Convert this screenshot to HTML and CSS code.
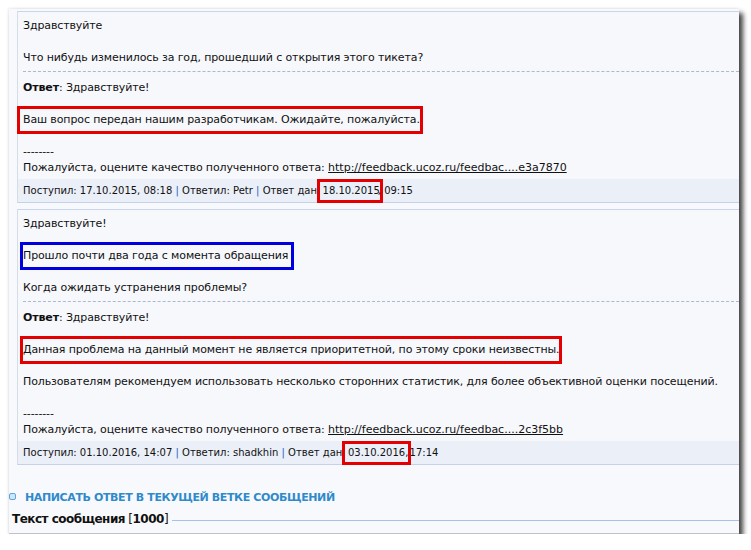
FILE: index.html
```html
<!DOCTYPE html>
<html lang="ru">
<head>
    <meta charset="UTF-8">
    <title>Тикет</title>
    <link rel="stylesheet" href="styles.css">
</head>
<body>

    <div class="shot">
        <div class="post">
            <div class="msg">Здравствуйте<br><br>Что нибудь изменилось за год, прошедший с открытия этого тикета?</div>
            <div class="answer">
                <b>Ответ</b>: Здравствуйте!<br><br>
                <span class="mark red big">Ваш вопрос передан нашим разработчикам. Ожидайте, пожалуйста.</span><br><br>
                --------<br>
                Пожалуйста, оцените качество полученного ответа: <a href="#">http://feedback.ucoz.ru/feedbac....e3a7870</a>
            </div>
            <div class="meta">Поступил: 17.10.2015, 08:18 <span class="sep">|</span> Ответил: Petr <span class="sep">|</span> Ответ дан: <span class="mark red date">18.10.2015</span>, 09:15</div>
        </div>

        <div class="post">
            <div class="msg">
                Здравствуйте!<br><br>
                <span class="mark blue">Прошло почти два года с момента обращения</span><br><br>
                Когда ожидать устранения проблемы?
            </div>
            <div class="answer">
                <b>Ответ</b>: Здравствуйте!<br><br>
                <span class="mark red">Данная проблема на данный момент не является приоритетной, по этому сроки неизвестны.</span><br><br>
                Пользователям рекомендуем использовать несколько сторонних статистик, для более объективной оценки посещений.<br><br>
                --------<br>
                Пожалуйста, оцените качество полученного ответа: <a href="#">http://feedback.ucoz.ru/feedbac....2c3f5bb</a>
            </div>
            <div class="meta">Поступил: 01.10.2016, 14:07 <span class="sep">|</span> Ответил: shadkhin <span class="sep">|</span> Ответ дан: <span class="mark red date">03.10.2016,</span> 17:14</div>
        </div>

        <div class="reply-head"><span class="bullet"></span>НАПИСАТЬ ОТВЕТ В ТЕКУЩЕЙ ВЕТКЕ СООБЩЕНИЙ</div>
        <div class="legend"><span><b>Текст сообщения</b> [<b>1000</b>]</span></div>
    </div>

</body>
</html>
```

FILE: styles.css
```css
body { margin: 0; background: #fff; font-family: "DejaVu Sans", Verdana, sans-serif; font-size: 11px; letter-spacing: -0.12px; color: #111; }

.shot { margin: 9px 0 0 9px; width: 730px; height: 525px; box-sizing: border-box; background: #f8f9fc; border-bottom: 1px solid #bfc3c8; overflow: hidden; box-shadow: 4px 4px 5px rgba(0, 0, 0, 0.75), -1px -1px 2px rgba(0, 0, 0, 0.08); }

.post { margin: 2px -20px 0 8px; background: #f7f8fc; border-top: 1px solid #c8d5ec; border-left: 1px solid #d6dce8; border-bottom: 1px solid #c3d2ea; }
.post + .post { margin-top: 6px; }
.msg { padding: 6px 0 5px 5px; line-height: 16px; }
.answer { margin-left: 5px; padding: 8px 0 0; border-top: 1px dashed #a9b8d3; line-height: 16px; }
.answer a { color: #111; text-decoration: underline; letter-spacing: 0; }
.meta { margin-top: 3px; padding-left: 5px; height: 23px; line-height: 23px; background: #ebeff8; font-size: 10px; letter-spacing: 0; }
.sep { color: #1f5fc4; }

.mark { display: inline-block; line-height: 16px; outline: 3px solid #e40000; }
.mark.red { padding: 3px 0 3px 0; margin: -3px 0; }
.mark.big { padding-left: 3px; margin-left: -3px; }
.mark.blue { outline-color: #0000dc; padding: 3px 3px 3px 0; margin: -3px -3px -3px 0; }
.mark.date { line-height: 18px; padding: 0 0 0 3px; margin: 0 -2px 0 -4px; }

.reply-head { margin: 25px 0 0 15px; line-height: 16px; font-size: 11px; letter-spacing: -0.38px; font-weight: bold; color: #2f8acb; }
.bullet { display: inline-block; width: 5px; height: 5px; margin: 0 9px 0 -15px; border: 1px solid #5aa6e0; border-radius: 2px; background: #cfe6f8; vertical-align: 1px; }
.legend { margin: 5px 0 0 3px; display: flex; align-items: center; line-height: 16px; font-size: 12px; letter-spacing: -0.5px; }
.legend::after { content: ""; flex: 1; margin: 2px 0 0 4px; border-top: 1px solid #a7c1e8; }
```
